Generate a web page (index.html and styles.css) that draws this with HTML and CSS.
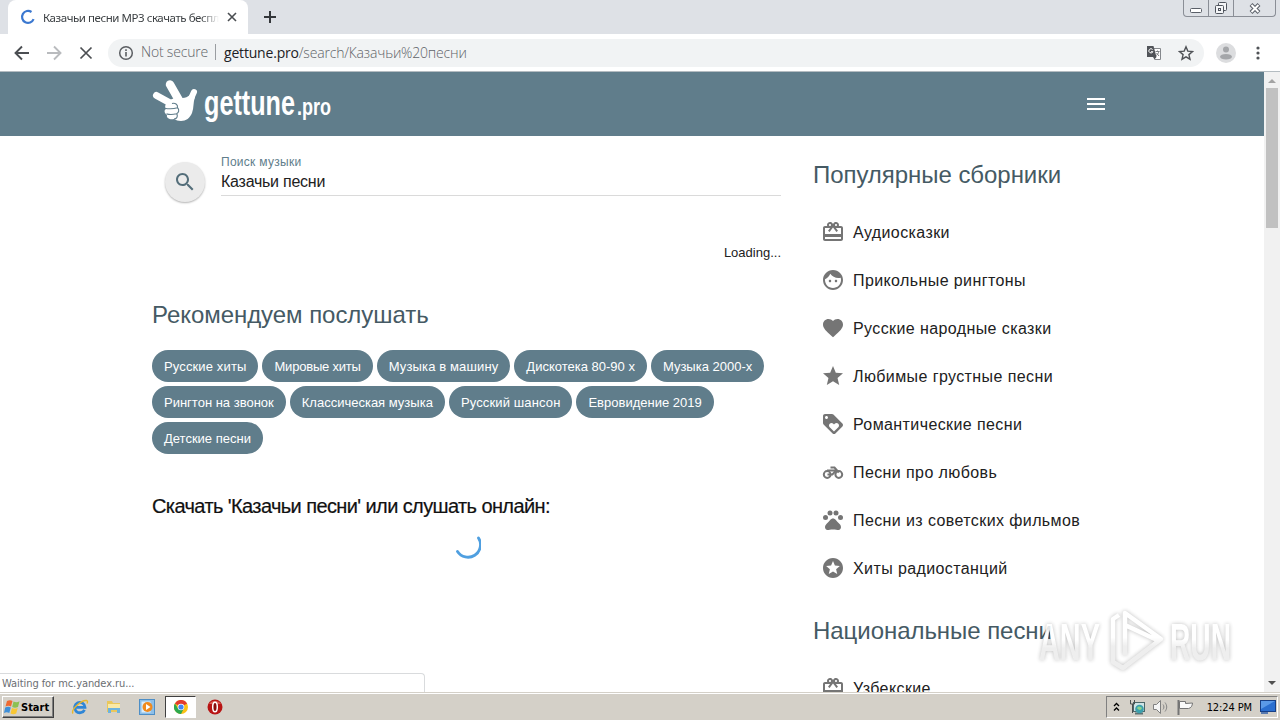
FILE: index.html
```html
<!DOCTYPE html>
<html lang="ru">
<head>
    <meta charset="UTF-8">
    <meta name="viewport" content="width=device-width, initial-scale=1.0">
    <title>Казачьи песни MP3 скачать бесплатно</title>
    <link rel="stylesheet" href="styles.css">
</head>
<body>
    <svg class="defs" width="0" height="0">
        <symbol id="gift" viewBox="0 0 24 24"><path d="M20 6h-2.18c.11-.31.18-.65.18-1 0-1.66-1.34-3-3-3-1.05 0-1.96.54-2.5 1.35l-.5.67-.5-.68C10.96 2.54 10.05 2 9 2 7.34 2 6 3.34 6 5c0 .35.07.69.18 1H4c-1.11 0-1.99.89-1.99 2L2 19c0 1.11.89 2 2 2h16c1.11 0 2-.89 2-2V8c0-1.11-.89-2-2-2zm-5-2c.55 0 1 .45 1 1s-.45 1-1 1-1-.45-1-1 .45-1 1-1zM9 4c.55 0 1 .45 1 1s-.45 1-1 1-1-.45-1-1 .45-1 1-1zm11 15H4v-2h16v2zm0-5H4V8h5.08L7 10.83 8.62 12 11 8.76l1-1.36 1 1.36L15.38 12 17 10.83 14.92 8H20v6z"/></symbol>
    </svg>

    <div class="window">
        <div class="tabs">
            <div class="tab">
                <svg class="tab-spinner" width="16" height="16" viewBox="0 0 16 16"><path d="M11.5 3A6 6 0 1 0 13.6 10.2" fill="none" stroke="#3b78d0" stroke-width="2.2"/></svg>
                <span class="tab-title">Казачьи песни MP3 скачать беспл</span>
                <svg width="10" height="10" viewBox="0 0 10 10"><path d="M1 1l8 8M9 1L1 9" stroke="#4a4d51" stroke-width="1.6"/></svg>
            </div>
            <svg class="new-tab" width="12" height="12" viewBox="0 0 12 12"><path d="M6 0v12M0 6h12" stroke="#34373b" stroke-width="2"/></svg>
            <div class="controls">
                <span><svg width="14" height="16" viewBox="0 0 14 16"><rect x="1.5" y="8.5" width="11" height="4" rx="1" fill="#fff" stroke="#5a5f68"/></svg></span>
                <span><svg width="14" height="16" viewBox="0 0 14 16"><g fill="#f4f5f7" stroke="#4f545d"><rect x="4.5" y="2.5" width="8" height="8" rx="1"/><rect x="1.5" y="5.5" width="8" height="8" rx="1"/><rect x="4.5" y="8.5" width="2" height="2"/></g></svg></span>
                <span><svg width="14" height="16" viewBox="0 0 14 16"><path d="M3 4.500l8 8M11 4.500l-8 8" stroke="#5a5f68" stroke-width="4"/><path d="M3.500 5l7 7M10.500 5l-7 7" stroke="#fff" stroke-width="2"/></svg></span>
            </div>
        </div>

        <div class="toolbar">
            <svg width="16" height="16" viewBox="0 0 16 16"><path d="M15 8H2M8 1.500L1.500 8 8 14.500" fill="none" stroke="#4b4e52" stroke-width="1.900"/></svg>
            <svg width="16" height="16" viewBox="0 0 16 16"><path d="M1 8h13M8 1.500L14.500 8 8 14.500" fill="none" stroke="#b9bbbe" stroke-width="1.900"/></svg>
            <svg width="16" height="16" viewBox="0 0 16 16"><path d="M2.500 2.500l11 11M13.500 2.500l-11 11" stroke="#4b4e52" stroke-width="1.700"/></svg>
            <div class="address">
                <svg width="16" height="16" viewBox="0 0 16 16"><circle cx="8" cy="8" r="6.300" fill="none" stroke="#5b5e62" stroke-width="1.500"/><path d="M8 7v4.500M8 4.300v1.600" stroke="#5b5e62" stroke-width="1.600"/></svg>
                <span class="secure">Not secure</span>
                <span class="url"><b>gettune.pro</b>/search/Казачьи%20песни</span>
                <svg class="translate" width="16" height="16" viewBox="0 0 16 16"><path d="M7 3.500h7.500v11H8.500" fill="#fff" stroke="#85888c"/><path d="M1 1h6.500l3 11H1z" fill="#505358"/><path d="M6.600 4.500a2.100 2.100 0 1 0 .3 2.200H5" fill="none" stroke="#fff"/><path d="M9.500 6.500h4M11.500 5.500v1M12.800 6.500c-.3 1.800-1.300 3-2.500 4M10.500 8l2.500 3" fill="none" stroke="#7b7e82"/><path d="M7 12l1.500 2.500 2-2.500z" fill="#505358"/></svg>
                <svg class="bookmark" width="16" height="16" viewBox="0 0 16 16"><path d="M8 1.800l1.800 4.300 4.700.4-3.600 3.100 1.100 4.600L8 11.800l-4 2.400 1.100-4.600-3.600-3.100 4.700-.4z" fill="none" stroke="#505357" stroke-width="1.400"/></svg>
            </div>
            <svg class="profile" width="20" height="20" viewBox="0 0 20 20"><circle cx="10" cy="10" r="10" fill="#dcdddf"/><circle cx="10" cy="6.500" r="3" fill="#a4a6a9"/><ellipse cx="10" cy="13.800" rx="6" ry="2.800" fill="#a4a6a9"/></svg>
            <svg class="menu-dots" width="4" height="16" viewBox="0 0 4 16" fill="#505357"><circle cx="2" cy="3" r="1.600"/><circle cx="2" cy="8" r="1.600"/><circle cx="2" cy="13" r="1.600"/></svg>
        </div>

        <div class="viewport">
            <div class="page">
                <header>
                    <svg class="logo" width="180" height="48" viewBox="0 0 180 48">
                        <g fill="none" stroke="#fff" stroke-linecap="round">
                            <path d="M4.500 17.500L20 26" stroke-width="7"/>
                            <path d="M18 6.500L28 24" stroke-width="8.500"/>
                            <path d="M42 14L37 25" stroke-width="6"/>
                        </g>
                        <path d="M17 23c3-3 8-3.500 12-3 4 .5 6-1 9-3l5 2c-2 5-1 11-3 16-2 5-6 8-11 8-3 0-5-1-7-2-4 1-8-1-7-4-3-2-3-5-1-6-2-3 0-6 3-8z" fill="#fff"/>
                        <path d="M12.500 30.200c5 1 9 .8 13-.5 2 2 1.500 5-1 6-3 .8-7 1-10 .2M20 25.500c3-1 6 1 5.500 4M25 36c1 3-.5 5-3 5" fill="none" stroke="#607d8b" stroke-width="1.100"/>
                        <g fill="#fff" font-family="Liberation Sans" font-weight="bold">
                            <text x="52" y="37" font-size="35" textLength="91" lengthAdjust="spacingAndGlyphs">gettune</text>
                            <text x="145" y="37" font-size="24" textLength="34" lengthAdjust="spacingAndGlyphs">.pro</text>
                        </g>
                    </svg>
                    <div class="hamburger"><i></i><i></i><i></i></div>
                </header>
                <div class="container">
                    <main>
                        <div class="search">
                            <div class="search-btn"><svg width="24" height="24" viewBox="0 0 24 24" fill="#546e7a"><path d="M15.500 14h-.79l-.28-.27C15.410 12.590 16 11.110 16 9.500 16 5.910 13.090 3 9.500 3S3 5.910 3 9.500 5.910 16 9.500 16c1.610 0 3.090-.59 4.230-1.570l.27.28v.79l5 4.990L20.490 19l-4.990-5zm-6 0C7.010 14 5 11.990 5 9.500S7.010 5 9.500 5 14 7.010 14 9.500 11.990 14 9.500 14z"/></svg></div>
                            <div class="field">
                                <label>Поиск музыки</label>
                                <div class="value">Казачьи песни</div>
                            </div>
                        </div>
                        <p class="loading">Loading...</p>
                        <h2 class="recommend">Рекомендуем послушать</h2>
                        <div class="chips">
                            <a class="wide">Русские хиты</a>
                            <a class="narrow">Мировые хиты</a>
                            <a class="wide">Музыка в машину</a>
                            <a>Дискотека 80-90 х</a>
                            <a>Музыка 2000-х</a>
                            <a>Рингтон на звонок</a>
                            <a>Классическая музыка</a>
                            <a class="wide">Русский шансон</a>
                            <a>Евровидение 2019</a>
                            <a>Детские песни</a>
                        </div>
                        <h1>Скачать 'Казачьи песни' или слушать онлайн:</h1>
                        <svg class="spinner" width="28" height="28" viewBox="0 0 28 28"><path d="M25.500 6A12 12 0 0 1 4.500 19.500" fill="none" stroke="#4f9fe0" stroke-width="2.800" stroke-linecap="round"/></svg>
                    </main>
                    <aside>
                        <h2>Популярные сборники</h2>
                        <ul>
                            <li><svg><use href="#gift"/></svg><span>Аудиосказки</span></li>
                            <li><svg viewBox="0 0 24 24"><path d="M9 11.750c-.69 0-1.250.56-1.250 1.250s.56 1.250 1.250 1.250 1.250-.56 1.250-1.250-.56-1.250-1.250-1.250zm6 0c-.69 0-1.250.56-1.250 1.250s.56 1.250 1.250 1.250 1.250-.56 1.250-1.250-.56-1.250-1.250-1.250zM12 2C6.480 2 2 6.480 2 12s4.480 10 10 10 10-4.480 10-10S17.520 2 12 2zm0 18c-4.410 0-8-3.590-8-8 0-.29.02-.58.05-.86 2.360-1.050 4.230-2.980 5.210-5.370C11.070 8.330 14.050 10 17.420 10c.78 0 1.530-.09 2.250-.26.21.71.33 1.470.33 2.260 0 4.410-3.590 8-8 8z"/></svg><span>Прикольные рингтоны</span></li>
                            <li><svg viewBox="0 0 24 24"><path d="M12 21.350l-1.450-1.320C5.400 15.360 2 12.280 2 8.500 2 5.420 4.420 3 7.500 3c1.740 0 3.410.81 4.500 2.090C13.090 3.810 14.760 3 16.500 3 19.580 3 22 5.420 22 8.500c0 3.780-3.400 6.860-8.550 11.540L12 21.350z"/></svg><span>Русские народные сказки</span></li>
                            <li><svg viewBox="0 0 24 24"><path d="M12 17.270L18.180 21l-1.640-7.030L22 9.240l-7.190-.61L12 2 9.190 8.630 2 9.240l5.460 4.730L5.820 21z"/></svg><span>Любимые грустные песни</span></li>
                            <li><svg viewBox="0 0 24 24"><path d="M21.410 11.580l-9-9C12.050 2.220 11.550 2 11 2H4c-1.100 0-2 .9-2 2v7c0 .55.22 1.050.59 1.420l9 9c.36.36.86.58 1.410.58.55 0 1.050-.22 1.410-.59l7-7c.37-.36.59-.86.59-1.410 0-.55-.23-1.060-.59-1.420zM5.500 7C4.670 7 4 6.330 4 5.500S4.670 4 5.500 4 7 4.670 7 5.500 6.330 7 5.500 7zm11.770 8.270L13 19.540l-4.270-4.270C8.280 14.810 8 14.190 8 13.500c0-1.380 1.120-2.500 2.500-2.500.69 0 1.320.28 1.770.74l.73.72.73-.73c.45-.45 1.080-.73 1.770-.73 1.380 0 2.500 1.120 2.500 2.500 0 .69-.28 1.320-.73 1.770z"/></svg><span>Романтические песни</span></li>
                            <li><svg viewBox="0 0 24 24"><g fill="none" stroke="#757575" stroke-width="2"><circle cx="6.200" cy="14.500" r="3.400"/><circle cx="17.800" cy="14.500" r="3.400"/><path d="M6.500 14.500h4.800l3.500-3.500M6 10.600h9.500M9.500 7.500h4l4.300 5"/></g></svg><span>Песни про любовь</span></li>
                            <li><svg viewBox="0 0 24 24"><circle cx="4.500" cy="9.500" r="2.500"/><circle cx="9" cy="5" r="2.500"/><circle cx="15" cy="5" r="2.500"/><circle cx="19.500" cy="9.500" r="2.500"/><path d="M17.340 14.860c-.87-1.020-1.600-1.890-2.480-2.910-.46-.54-1.050-1.080-1.750-1.320-.11-.04-.22-.07-.33-.09-.25-.04-.52-.04-.78-.04s-.53 0-.79.05c-.11.02-.22.05-.33.09-.7.24-1.280.78-1.750 1.320-.87 1.020-1.600 1.890-2.480 2.910-1.310 1.310-2.920 2.760-2.620 4.790.29 1.020 1.020 2.030 2.330 2.320.73.15 3.060-.44 5.540-.44h.18c2.480 0 4.810.58 5.540.44 1.310-.29 2.040-1.310 2.330-2.320.31-2.040-1.300-3.490-2.610-4.800z"/></svg><span>Песни из советских фильмов</span></li>
                            <li><svg viewBox="0 0 24 24"><path d="M11.990 2C6.470 2 2 6.480 2 12s4.470 10 9.990 10C17.520 22 22 17.520 22 12S17.520 2 11.990 2zm4.240 16L12 15.450 7.770 18l1.120-4.810-3.730-3.230 4.920-.42L12 5l1.920 4.530 4.920.42-3.730 3.230L16.230 18z"/></svg><span>Хиты радиостанций</span></li>
                        </ul>
                        <h2>Национальные песни</h2>
                        <ul>
                            <li><svg><use href="#gift"/></svg><span>Узбекские</span></li>
                        </ul>
                    </aside>
                </div>
            </div>
            <div class="scrollbar">
                <i class="up"></i>
                <i class="thumb"></i>
                <i class="down"></i>
            </div>
            <div class="status">Waiting for mc.yandex.ru...</div>
        </div>
    </div>

    <div class="taskbar">
        <div class="start">
            <svg width="17" height="16" viewBox="0 0 17 16"><path d="M3 2c2-1 4-1 5.500 0L7 7.500C5.500 6.500 3.500 6.500 1.500 7.500z" fill="#ef6a32"/><path d="M9.500 2.500c2 1 4 1 6-.2L14 8c-2 1-4 1-5.800 0z" fill="#8cc152"/><path d="M1.200 8.500c2-1 4-1 5.600 0L5.300 14c-1.600-1-3.700-1-5.300 0z" fill="#3f8fd8"/><path d="M8 9c2 1 4 1 5.700 0l-1.500 5.500c-2 1-4 1-5.700 0z" fill="#f9c733"/></svg>
            Start
        </div>
        <div class="launch">
            <svg width="18" height="16" viewBox="0 0 18 16"><path d="M13.500 10.800A5.200 5.200 0 1 1 14 8.300H5" fill="none" stroke="#2f86d6" stroke-width="2.800"/><path d="M2 14.500C-.5 11 10 1 15.500 1.500c1.500.3 1 2 .5 3" fill="none" stroke="#e8b72c" stroke-width="1.400"/></svg>
            <svg width="16" height="16" viewBox="0 0 16 16"><path d="M1 2h5l1 2h7v9H1z" fill="#e9c75c"/><path d="M2 5h12v6H2z" fill="#f9e9a6"/><path d="M2 9h12v5h-3v-3H5v3H2z" fill="#6db3de"/></svg>
            <svg width="16" height="16" viewBox="0 0 16 16"><rect x=".5" y=".5" width="15" height="15" fill="#8dbfe8" stroke="#4d8ec6"/><rect x="2.500" y="2.500" width="9" height="11" fill="#dcedf9"/><circle cx="8.500" cy="8" r="5" fill="#f08a1d"/><path d="M7 5l4.500 3L7 11z" fill="#fff"/></svg>
            <span class="active"><svg width="14" height="14" viewBox="0 0 14 14"><circle cx="7" cy="7" r="7" fill="#fbc116"/><path d="M7 7L.9 3.500A7 7 0 0 1 13.100 3.500z" fill="#e33b2e"/><path d="M.9 3.500A7 7 0 0 0 7 14L9.800 8.500 7 7 4 8.500z" fill="#2da94f"/><circle cx="7" cy="7" r="3.300" fill="#fff"/><circle cx="7" cy="7" r="2.600" fill="#4285f4"/></svg></span>
            <svg width="16" height="16" viewBox="0 0 16 16"><circle cx="8" cy="8" r="7.500" fill="#b81414"/><path d="M2 5a7 6 0 0 1 12 0z" fill="#dc5a52"/><ellipse cx="8" cy="8" rx="2.300" ry="4.800" fill="#8a0c0c" stroke="#fff" stroke-width="1.500"/></svg>
        </div>
        <div class="tray">
            <svg width="7" height="10" viewBox="0 0 7 10"><path d="M1 4l2.500-2.500L6 4M1 8.500L3.500 6 6 8.500" fill="none" stroke="#000" stroke-width="1.300"/></svg>
            <svg class="network" width="16" height="16" viewBox="0 0 16 16"><rect x="4.500" y="3.500" width="11" height="9" fill="#cfe4e6" stroke="#4c6668"/><path d="M6 14.500h8" stroke="#5d7274" stroke-width="2"/><circle cx="10.500" cy="10" r="4.300" fill="#3ba0ad"/><path d="M8 9c2-3 4-1 5 0-1 3-4 2-5 0z" fill="#8fd38c"/><path d="M1.500 1v4h4V1M3.500 5v9" fill="none" stroke="#4b4f50"/></svg>
            <svg class="sound" width="17" height="16" viewBox="0 0 17 16"><path d="M1.500 5.500h3l4-4v13l-4-4h-3z" fill="#f5f5f5" stroke="#808080"/><path d="M11 5.500c1.200 1.500 1.200 3.500 0 5M13 3.500c2.300 3 2.300 6 0 9" fill="none" stroke="#858585"/></svg>
            <svg class="flag" width="18" height="16" viewBox="0 0 18 16"><path d="M2.500 1v15" stroke="#757575" stroke-width="2"/><path d="M3.500 2.500h6v2l7-.5c-.2 3-1.500 5-4 5.500H3.500z" fill="#fafafa" stroke="#757575"/></svg>
            <span class="clock">12:24 PM</span>
            <svg width="16" height="14" viewBox="0 0 16 14"><rect x=".5" y=".5" width="15" height="11" fill="#2b6fd0" stroke="#173f86"/><path d="M1 1h14L1 9z" fill="#5b9ae8"/><path d="M1 13h7" stroke="#2f5ea8" stroke-width="1.500"/></svg>
        </div>
    </div>

    <svg class="watermark" width="204" height="68" viewBox="0 0 204 68">
        <defs>
            <linearGradient id="fade" x1="0" y1="0" x2="0" y2="1">
                <stop offset=".45" stop-color="#fff"/>
                <stop offset=".6" stop-color="#ececec"/>
            </linearGradient>
        </defs>
        <g fill="url(#fade)" font-family="Liberation Sans" font-weight="bold" font-size="51">
            <text x="6" y="53" textLength="61" lengthAdjust="spacingAndGlyphs">ANY</text>
            <text x="137" y="53" textLength="61" lengthAdjust="spacingAndGlyphs">RUN</text>
        </g>
        <path d="M92 48V6l36 26-38 29-10-6V12l6-4M92 18l32 15" fill="none" stroke="url(#fade)" stroke-width="4.500" stroke-linejoin="round"/>
    </svg>
</body>
</html>
```
FILE: styles.css
```css
body {
    margin: 0;
    width: 1280px;
    height: 720px;
    overflow: hidden;
    display: flex;
    flex-direction: column;
    position: relative;
    font-family: "Liberation Sans", Arial, sans-serif;
    background-color: #fff;
    color: #212121;
}

svg {
    flex: none;
}

.defs {
    position: absolute;
}

.window {
    height: 692px;
    display: flex;
    flex-direction: column;
}

/* Pestañas */
.tabs {
    height: 34px;
    background-color: #dee1e6;
    display: flex;
    align-items: flex-end;
    padding-left: 8px;
}

.tab {
    box-sizing: border-box;
    width: 240px;
    height: 34px;
    padding: 0 11px 0 12px;
    border-radius: 8px 8px 0 0;
    background-color: #fff;
    display: flex;
    align-items: center;
}

.tab-title {
    width: 176px;
    margin: 0 8px 0 7px;
    white-space: nowrap;
    font: 11.5px "Noto Sans", sans-serif;
    letter-spacing: -0.45px;
    color: #3c4043;
    -webkit-mask-image: linear-gradient(to right, #000 90%, transparent);
    mask-image: linear-gradient(to right, #000 90%, transparent);
}

.new-tab {
    margin: 0 0 11px 16px;
}

.controls {
    align-self: flex-start;
    display: flex;
    height: 16px;
    margin: 0 4px 0 auto;
    border: 1px solid #8a8e96;
    border-top: 0;
    border-radius: 0 0 4px 4px;
}

.controls span {
    width: 24px;
    display: flex;
    justify-content: center;
    border-left: 1px solid #8a8e96;
}

.controls span:first-child {
    border-left: 0;
}

.controls span:last-child {
    width: 41px;
}

/* Barra de direcciones */
.toolbar {
    height: 37px;
    border-bottom: 1px solid #b4bcc1;
    display: flex;
    align-items: center;
    gap: 16px;
    padding-left: 14px;
}

.address {
    box-sizing: border-box;
    width: 1096px;
    height: 28px;
    margin-left: -2px;
    padding: 0 10px;
    border-radius: 14px;
    background-color: #f1f3f4;
    display: flex;
    align-items: center;
    font: 300 14px "Open Sans", "Noto Sans", sans-serif;
    letter-spacing: -0.19px;
    color: #5f6368;
}

.secure {
    margin-left: 7px;
    padding-right: 7px;
    border-right: 1px solid #9a9da1;
    line-height: 16px;
    margin-bottom: 1px;
}

.url {
    margin: 0 0 1px 8px;
}

.url b {
    font-weight: 400;
    color: #202124;
}

.translate {
    margin-left: auto;
}

.bookmark {
    margin-left: 16px;
}

.profile {
    margin-left: -4px;
}

.menu-dots {
    margin-left: 4px;
}

.viewport {
    flex: 1;
    min-height: 0;
    display: flex;
    position: relative;
}

.page {
    width: 1264px;
    overflow: hidden;
}

header {
    box-sizing: border-box;
    height: 64px;
    padding: 0 159px 0 152px;
    background-color: #607d8b;
    display: flex;
    align-items: center;
    justify-content: space-between;
}

.logo {
    margin-top: -4px;
}

.hamburger {
    width: 18px;
    display: grid;
    gap: 3px;
}

.hamburger i {
    height: 2px;
    background-color: #fff;
}

.container {
    display: flex;
    gap: 32px;
    margin-left: 152px;
    width: 960px;
}

main {
    width: 629px;
}

.search {
    display: flex;
    height: 60px;
}

.search-btn {
    width: 40px;
    height: 40px;
    margin: 26px 15px 0 13px;
    border-radius: 50%;
    background-color: #ebebeb;
    box-shadow: 0 1px 2px rgba(0, 0, 0, 0.3);
    display: flex;
    align-items: center;
    justify-content: center;
}

.field {
    flex: 1;
    box-sizing: border-box;
    padding-top: 18px;
    margin-left: 1px;
    border-bottom: 1px solid #dadada;
}

.field label {
    display: block;
    font-size: 12px;
    line-height: 16px;
    letter-spacing: 0.28px;
    color: #607d8b;
}

.field .value {
    font-size: 16px;
    line-height: 24px;
    letter-spacing: -0.25px;
}

.loading {
    margin: 47px 0 0;
    text-align: right;
    font-size: 13px;
    line-height: 20px;
}

h2 {
    margin: 23px 0 17px;
    font-size: 24px;
    line-height: 32px;
    font-weight: 400;
    letter-spacing: -0.05px;
    color: #455a64;
    white-space: nowrap;
}

.recommend {
    margin: 36px 0 19px;
}

.chips {
    display: flex;
    flex-wrap: wrap;
    gap: 4px;
}

.chips a {
    height: 31px;
    padding: 1px 12px 0;
    border-radius: 16px;
    background-color: #607d8b;
    color: #fff;
    font-size: 13px;
    line-height: 32px;
}

.chips .wide {
    letter-spacing: 0.13px;
}

.chips .narrow {
    letter-spacing: -0.2px;
}

h1 {
    margin: 36px 0 0;
    font-size: 20px;
    line-height: 32px;
    font-weight: 400;
    letter-spacing: -0.6px;
    color: #111;
    -webkit-text-stroke: 0.2px #111;
}

.spinner {
    display: block;
    margin: 10px auto 0;
}

ul {
    margin: 0;
    padding: 0;
    list-style: none;
}

li {
    display: flex;
    align-items: center;
    gap: 8px;
    height: 48px;
    padding-left: 8px;
    font-size: 16px;
    letter-spacing: 0.4px;
    white-space: nowrap;
}

li span {
    padding-top: 2px;
}

li svg {
    width: 24px;
    height: 24px;
    fill: #757575;
}

.scrollbar {
    width: 16px;
    background-color: #f1f1f1;
    display: flex;
    flex-direction: column;
    align-items: center;
}

.up, .down {
    border: 4px solid transparent;
}

.up {
    margin-top: 3px;
    border-bottom-color: #a3a3a3;
}

.down {
    margin: auto 0 3px;
    border-top-color: #505050;
}

.thumb {
    width: 12px;
    height: 140px;
    margin-top: 5px;
    background-color: #c1c1c1;
}

.status {
    position: absolute;
    left: 0;
    bottom: 0;
    box-sizing: border-box;
    width: 425px;
    height: 19px;
    padding-left: 2px;
    border: solid #d9dbdd;
    border-width: 1px 1px 0 0;
    border-radius: 0 4px 0 0;
    background-color: #fff;
    font: 11px/19px "DejaVu Sans Condensed", "Noto Sans", sans-serif;
    letter-spacing: -0.07px;
    color: #6b6e72;
}

/* Barra de tareas */
.taskbar {
    box-sizing: border-box;
    height: 28px;
    border-top: 1px solid #d4d0c8;
    box-shadow: inset 0 1px #fff;
    background-color: #d4d0c8;
    display: flex;
    align-items: center;
    padding: 1px 2px 0;
}

.start {
    box-sizing: border-box;
    width: 52px;
    height: 22px;
    padding-left: 1px;
    border: 1px solid;
    border-color: #fff #404040 #404040 #fff;
    box-shadow: inset -1px -1px #808080;
    display: flex;
    align-items: center;
    font: bold 11px "DejaVu Sans Condensed", sans-serif;
    color: #000;
}

.launch {
    display: flex;
    align-items: center;
    gap: 17px;
    margin-left: 17px;
}

.active {
    box-sizing: border-box;
    width: 31px;
    height: 22px;
    margin: 0 -6px 0 -7px;
    border: 1px solid;
    border-color: #404040 #fff #fff #404040;
    background-color: #fff;
    display: flex;
    align-items: center;
    justify-content: center;
}

.tray {
    box-sizing: border-box;
    width: 172px;
    height: 22px;
    margin-left: auto;
    padding: 0 1px 0 6px;
    border: 1px solid;
    border-color: #808080 #fff #fff #808080;
    display: flex;
    align-items: center;
}

.network {
    margin-left: 9px;
}

.sound {
    margin-left: 7px;
}

.flag {
    margin-left: 7px;
}

.clock {
    margin: 0 8px 0 auto;
    font: 11px "DejaVu Sans Condensed", sans-serif;
    letter-spacing: -0.1px;
    color: #000;
    white-space: nowrap;
}

.watermark {
    position: absolute;
    left: 1033px;
    top: 607px;
    opacity: 0.85;
    filter: drop-shadow(0 0 2px rgba(0, 0, 0, 0.3));
}
```
